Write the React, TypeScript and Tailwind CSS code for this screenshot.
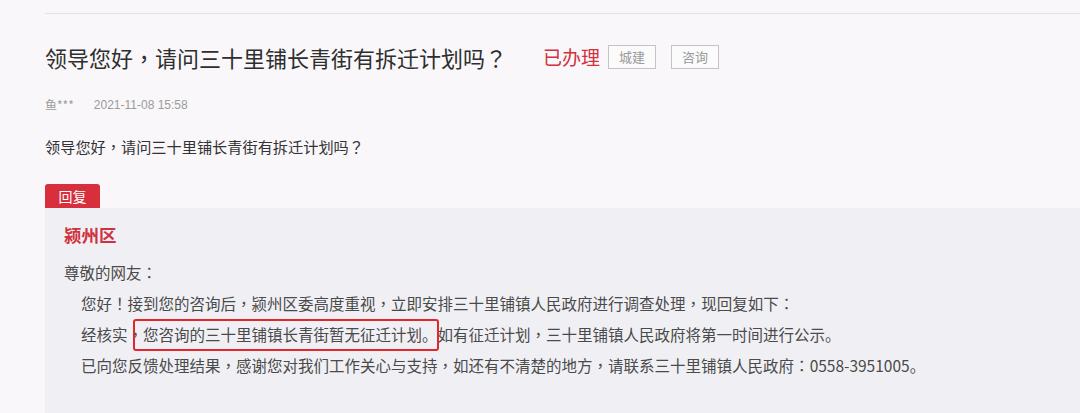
import React from "react";

const font = { fontFamily: '"Noto Sans CJK SC", "Noto Sans", sans-serif' };

function P({ t }: { t: string }) {
  const parts = t.split(/([，！？：])/);
  return (
    <>
      {parts.map((p, i) =>
        /^[，！？：]$/.test(p) ? (
          <span key={i} style={{ fontFamily: '"Noto Sans CJK TC", sans-serif' }}>
            {p}
          </span>
        ) : (
          <React.Fragment key={i}>{p}</React.Fragment>
        )
      )}
    </>
  );
}

export default function App() {
  return (
    <div
      className="w-[1080px] h-[413px] overflow-hidden bg-[#f9f7f9] pt-[13px] pl-[45px]"
      style={font}
    >
      <div className="h-px bg-[#e3e3e5]" />
      <div className="mt-[28px] flex items-center h-[30px]">
        <span className="text-[22px] leading-[30px] text-[#2e2e2e]">
          <P t="领导您好，请问三十里铺长青街有拆迁计划吗？" />
        </span>
        <span className="ml-[36px] text-[19px] leading-[30px] text-[#d3303d]">已办理</span>
        <span className="ml-[8px] w-[48px] h-[24px] border border-[#c4c4c4] bg-[#fbfbfb] text-[13px] leading-[22px] text-[#9a9a9a] text-center">
          城建
        </span>
        <span className="ml-[15px] w-[48px] h-[24px] border border-[#c4c4c4] bg-[#fbfbfb] text-[13px] leading-[22px] text-[#9a9a9a] text-center">
          咨询
        </span>
      </div>
      <div className="mt-[23px] h-[20px] flex items-center text-[12px] leading-[20px] text-[#9b9b9b]">
        <span>鱼***</span>
        <span className="ml-[20px]" style={{ fontFamily: '"Liberation Sans", sans-serif' }}>
          2021-11-08 15:58
        </span>
      </div>
      <div className="mt-[19px] h-[24px] text-[15.2px] leading-[24px] text-[#333]">
        <P t="领导您好，请问三十里铺长青街有拆迁计划吗？" />
      </div>
      <div className="mt-[26px] w-[55px] h-[24px] rounded-t-[3px] bg-[#d72f3c] text-white text-[14px] leading-[24px] text-center">
        回复
      </div>
      <div className="h-[300px] bg-[#f0f0f4] pl-[19px] pt-[14px]">
        <div className="h-[26px] text-[17.5px] leading-[26px] font-bold text-[#cf3140]">颍州区</div>
        <div className="mt-[9px] h-[31px] text-[15.5px] leading-[31px] text-[#4a4a4a]">
          <P t="尊敬的网友：" />
        </div>
        <div className="pl-[17px] text-[15.5px] leading-[31px] text-[#4a4a4a]">
          <div className="h-[31px] whitespace-nowrap">
            <P t="您好！接到您的咨询后，颍州区委高度重视，立即安排三十里铺镇人民政府进行调查处理，现回复如下：" />
          </div>
          <div className="relative h-[31px] whitespace-nowrap">
            <P t="经核实，您咨询的三十里铺镇长青街暂无征迁计划。如有征迁计划，三十里铺镇人民政府将第一时间进行公示。" />
            <div className="absolute left-[52px] top-[0px] w-[306px] h-[32px] border-2 border-[#e1262d] rounded-[3px]" />
          </div>
          <div className="h-[31px] whitespace-nowrap">
            <P t="已向您反馈处理结果，感谢您对我们工作关心与支持，如还有不清楚的地方，请联系三十里铺镇人民政府：0558-3951005。" />
          </div>
        </div>
      </div>
    </div>
  );
}
